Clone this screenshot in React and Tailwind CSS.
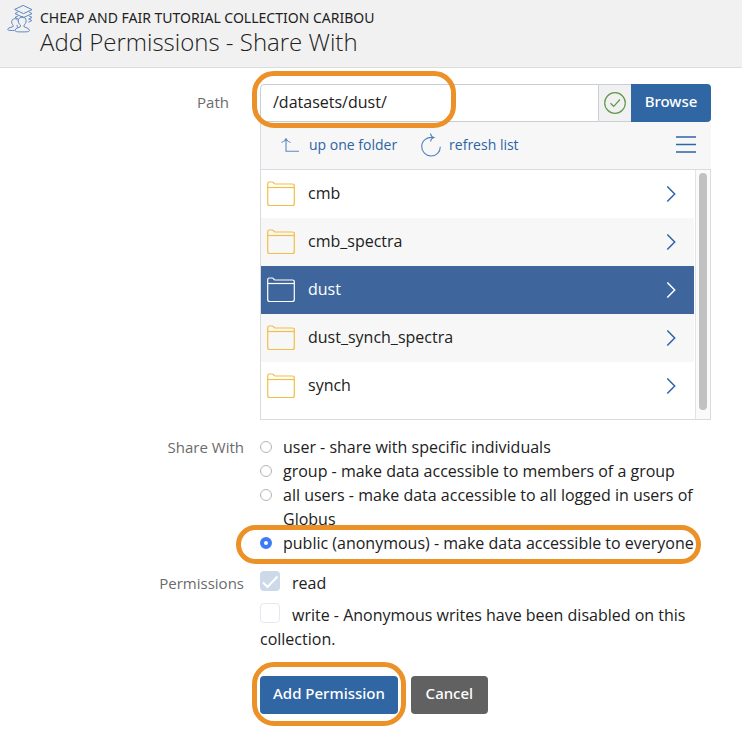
import React, { useState } from "react";

const folders = ["cmb", "cmb_spectra", "dust", "dust_synch_spectra", "synch"];

const shareOptions = [
  { id: "user", label: "user - share with specific individuals" },
  { id: "group", label: "group - make data accessible to members of a group" },
  { id: "all", label: "all users - make data accessible to all logged in users of Globus" },
  { id: "public", label: "public (anonymous) - make data accessible to everyone" },
];

function CollectionIcon() {
  return (
    <svg viewBox="0 0 26 28" className="h-7 w-[26px] shrink-0" fill="none" stroke="#5b86c0" strokeWidth="1" strokeLinejoin="round" strokeLinecap="round" aria-hidden="true">
      <path d="M16.500 .6 25 4.600 16.500 8.600 8 4.600Z" />
      <path d="m10.500 7.200-2.500 1.400 8.500 4 8.500-4-2.500-1.400" />
      <path d="m10.500 11.200-2.500 1.200 2.800 1.400M22.500 11.200l2.500 1.200-3.300 1.700M22.500 14.200l2.300 1.300-3 1.500" />
      <path d="M15.500 12c-2.700 0-4.200 1.600-4.200 3.800 0 1.900.9 3.400 2.100 4.300v1.600c-1.200.9-5.200 1.300-5.400 3.600 0 1.300 1.500 1.600 7.500 1.600s6.900-.3 6.900-1.600c-.2-2.300-4.200-2.700-5.400-3.600v-1.600c1.200-.9 2.100-2.400 2.100-4.300 0-2.200-1.100-3.800-3.600-3.800Z" />
      <path d="M10.500 15.200c-.6-1-1.500-1.500-2.600-1.500-2.100 0-3.200 1.400-3.200 3.200 0 1.500.6 2.600 1.500 3.300v1.300c-1 .8-5.400 1-5.500 3 0 .8.900 1 6.300 1M10.200 20.200c-.2.500-.2.900-.2 1.300l1.200.8" />
    </svg>
  );
}

function FolderIcon({ selected }) {
  return (
    <svg viewBox="0 0 28 26" className={selected ? "h-[26px] w-7 text-white" : "h-[26px] w-7 text-[#f2be45]"} fill="none" stroke="currentColor" strokeWidth="1.200" strokeLinejoin="round" aria-hidden="true">
      <path d="M.7 22.500V3c0-1.300.5-2 1.500-2h3.200C6.500 1 6.700 3 8 3h17.300c1.300 0 2 .6 2 1.700v17.800c0 1.400-.7 2-2 2H2.700c-1.300 0-2-.6-2-2Z" />
      <path d="M.7 6.500h26.600" />
    </svg>
  );
}

function Chevron() {
  return (
    <svg viewBox="0 0 10 18" className="h-[18px] w-[10px]" fill="none" stroke="currentColor" strokeWidth="1.500" aria-hidden="true">
      <path d="M1.300 1.500 8.700 9l-7.400 7.500" />
    </svg>
  );
}

function Ring({ className }) {
  return <span aria-hidden="true" className={"pointer-events-none absolute z-10 border-[5px] border-[#ec9127] " + className} />;
}

export default function App() {
  const [current, setCurrent] = useState("dust");
  const [share, setShare] = useState("public");
  const [path, setPath] = useState("/datasets/dust/");

  return (
    <div className="bg-white font-['Open_Sans',sans-serif] text-[16px] leading-6 text-[#212121]">
      <header className="flex gap-[7px] border-b border-[#dcdcdc] bg-[#f1f1f1] pt-[5px] pb-[11px] pl-[7px]">
        <CollectionIcon />
        <div className="pt-1">
          <p className="font-['Noto_Sans',sans-serif] text-[14px] leading-[18px]">CHEAP AND FAIR TUTORIAL COLLECTION CARIBOU</p>
          <h1 className="text-[24px] font-light leading-[29px]">Add Permissions - Share With</h1>
        </div>
      </header>

      <form className="grid grid-cols-[244px_minmax(0,1fr)] gap-x-4 pr-[31px] pt-4" onSubmit={(e) => e.preventDefault()}>
        <label htmlFor="path" className="pr-[15px] pt-[6px] text-right text-[15px] text-[#6b6b6b]">Path</label>
        <div>
          <div className="relative flex h-[38px]">
            <input
              id="path"
              value={path}
              onChange={(e) => setPath(e.target.value)}
              className="min-w-0 flex-1 rounded-tl border border-[#c9ced6] px-3 pb-0.5 outline-none"
            />
            <span className="flex w-8 items-center justify-center border-y border-[#c9ced6] bg-[#f1f1f1]">
              <svg viewBox="0 0 22 22" className="size-[22px]" fill="none" stroke="#5f9a4c" strokeWidth="1.200" role="img" aria-label="Path is valid">
                <circle cx="11" cy="11" r="10.300" />
                <path d="m6.500 11.300 3.200 3 6.300-6.800" />
              </svg>
            </span>
            <button type="button" className="w-20 rounded-r bg-[#3066a3] pb-1 font-['Noto_Sans',sans-serif] text-[15px] font-medium text-white">Browse</button>
            <Ring className="-left-2 -top-[13px] h-[57px] w-[204px] rounded-[22px]" />
          </div>

          <div className="flex h-12 items-center rounded-tr border-b border-l border-[#d8dbe2] bg-[#f7f7f7] pb-0.5 pl-5 pr-[15px] text-[14px] text-[#2c64a5]">
            <button type="button" className="flex items-center gap-[10px]">
              <svg viewBox="0 0 18 14" className="h-[14px] w-[18px]" fill="none" stroke="#5e8ac0" strokeWidth="1.100" aria-hidden="true">
                <path d="M.5 4.500Q4 3.500 5 .8q1 2.700 4.500 3.700M5 .8v12.500h13" />
              </svg>
              up one folder
            </button>
            <button type="button" className="ml-6 flex items-center gap-2">
              <svg viewBox="0 0 20 24" className="h-6 w-5" fill="none" stroke="#4f80bb" strokeWidth="1.100" aria-hidden="true">
                <path d="M12.500 4.500C5.500 3.500.7 8 .7 13.500c0 5.300 4 9.500 9.300 9.500s9.300-4 9.300-9.300M9.500 .5c.3 2.300 1.300 3.500 3.300 4-1.800.6-3 2-3.300 4" />
              </svg>
              refresh list
            </button>
            <button type="button" aria-label="Menu" className="ml-auto">
              <svg viewBox="0 0 20 18" className="h-[18px] w-5" stroke="#2f66a5" strokeWidth="1.500" aria-hidden="true">
                <path d="M0 1h20M0 8.500h20M0 16h20" />
              </svg>
            </button>
          </div>

          <div className="flex h-[250px] border-x border-b border-[#d8dbe2]">
            <ul className="min-w-0 flex-1">
              {folders.map((name) => (
                <li key={name} className="even:bg-[#f7f7f7]">
                  <button
                    type="button"
                    onClick={() => setCurrent(name)}
                    className={name === current ? "flex h-12 w-full items-center bg-[#3e669c] pl-[6px] pr-[18px] font-medium text-white" : "flex h-12 w-full items-center pl-[6px] pr-[18px] text-[#2c64a5]"}
                  >
                    <FolderIcon selected={name === current} />
                    <span className={name === current ? "flex-1 pb-0.5 pl-[13px] text-left" : "flex-1 pb-0.5 pl-[13px] text-left text-[#212121]"}>{name}</span>
                    <Chevron />
                  </button>
                </li>
              ))}
            </ul>
            <div className="ml-px w-[15px] border-l border-[#e3e3e6] bg-[#fafafa] pl-[3px] pt-[3px]">
              <div className="h-[237px] w-2 rounded-full bg-[#c1c1c1]" />
            </div>
          </div>
        </div>

        <span id="share-label" className="mt-[15px] text-right text-[15px] text-[#6b6b6b]">Share With</span>
        <div role="radiogroup" aria-labelledby="share-label" className="mt-[15px]">
          {shareOptions.map((o) => (
            <label key={o.id} className="relative flex">
              <input
                type="radio"
                name="share"
                checked={share === o.id}
                onChange={() => setShare(o.id)}
                className="mr-[11px] mt-[6px] size-3 shrink-0 appearance-none rounded-full border border-[#b5b5b5] bg-white checked:border-4 checked:border-[#3f7af6]"
              />
              <span>{o.label}</span>
              {o.id === "public" && <Ring className="-left-6 -top-[6px] h-[39px] w-[465px] rounded-full" />}
            </label>
          ))}
        </div>

        <span className="mt-4 text-right text-[15px] text-[#6b6b6b]">Permissions</span>
        <div className="mt-4">
          <label className="flex gap-3">
            <span className="relative block size-5">
              <input type="checkbox" checked disabled readOnly className="block size-5 appearance-none rounded bg-[#cbd9e8]" />
              <svg viewBox="0 0 20 20" className="absolute inset-0 size-5" fill="none" stroke="#fff" strokeWidth="2" aria-hidden="true">
                <path d="m3 11.500 4.500 4.500L17.500 5.500" />
              </svg>
            </span>
            read
          </label>
          <label className="mt-2 block">
            <input type="checkbox" disabled className="float-left mr-3 size-5 appearance-none rounded border border-[#e3e8f3] bg-white" />
            write - Anonymous writes have been disabled on this collection.
          </label>
        </div>

        <div className="col-start-2 mt-[25px] flex gap-[13px] pb-6 font-['Noto_Sans',sans-serif] text-[15px] font-medium text-white">
          <div className="relative">
            <button type="submit" className="h-[38px] min-w-[77px] rounded bg-[#3066a3] px-[13px] pb-1">Add Permission</button>
            <Ring className="-inset-x-2 -bottom-3 -top-[14px] rounded-[22px]" />
          </div>
          <button type="button" className="h-[38px] min-w-[77px] rounded bg-[#616161] px-[13px] pb-1">Cancel</button>
        </div>
      </form>
    </div>
  );
}
